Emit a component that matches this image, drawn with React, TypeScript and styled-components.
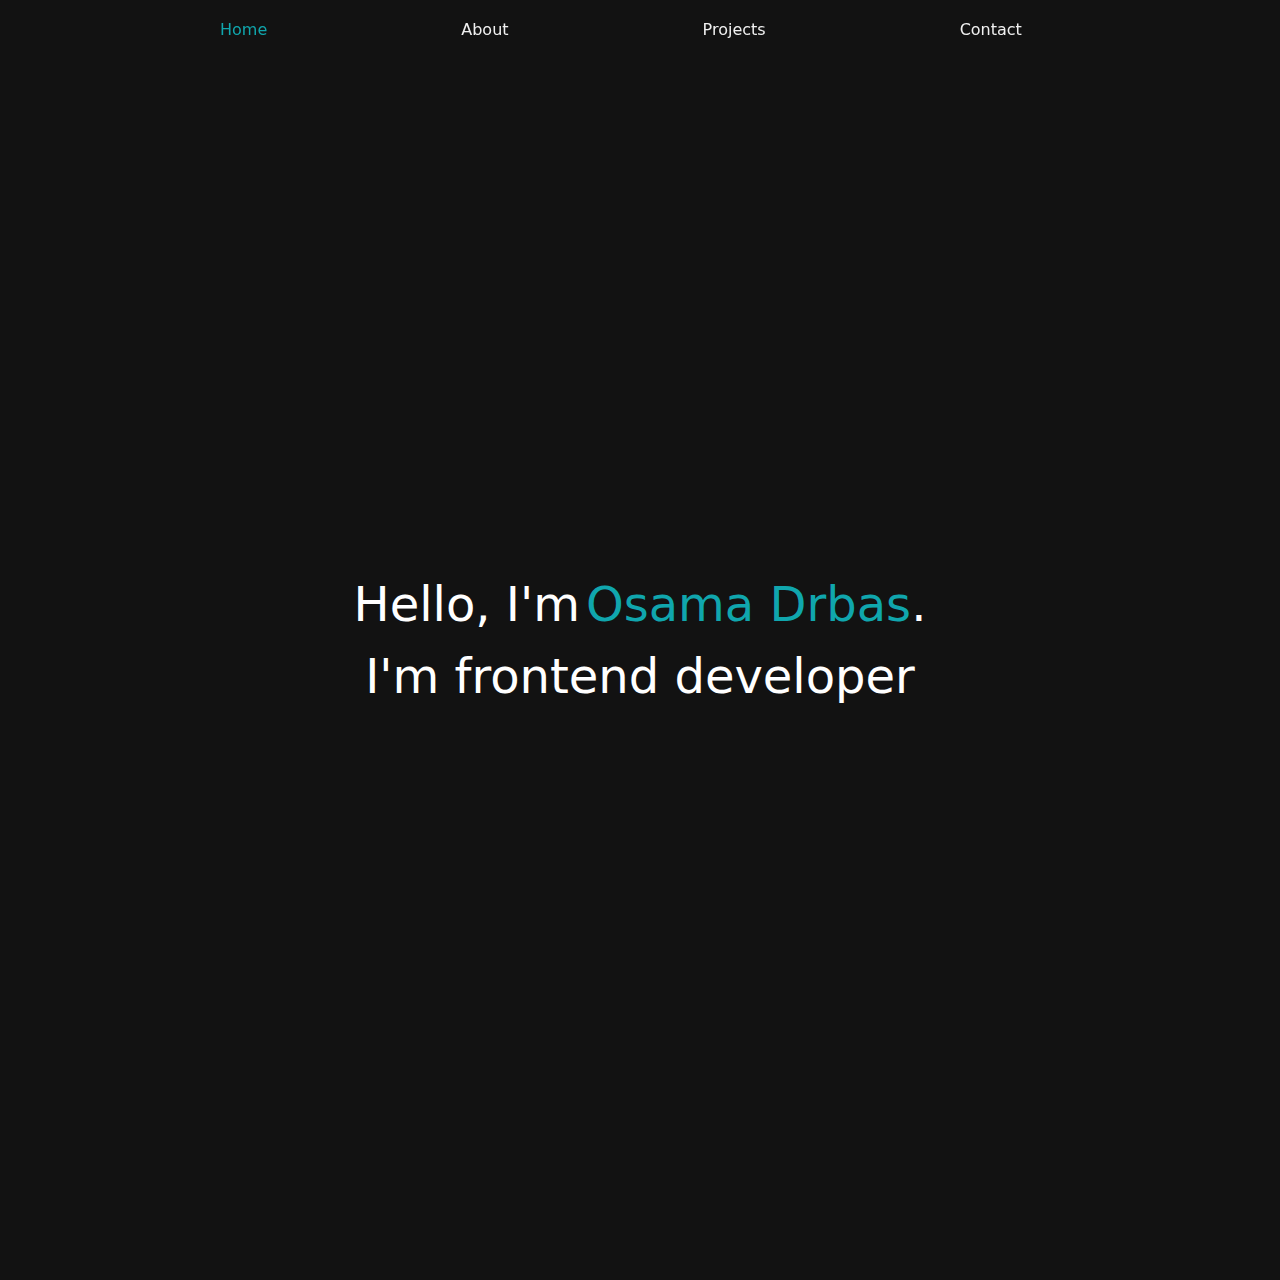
import styled, { createGlobalStyle } from "styled-components";

const GlobalStyle = createGlobalStyle`
  * {
    box-sizing: border-box;
  }
  body {
    margin: 0;
    background-color: #121212;
    font-family: "DejaVu Sans", sans-serif;
    color: #ffffff;
  }
`;

const Nav = styled.nav`
  position: fixed;
  top: 0;
  left: 0;
  right: 0;
  height: 58px;
  display: flex;
  align-items: center;
  padding-left: 220px;
  gap: 194px;
`;

const NavLink = styled.a<{ $active?: boolean }>`
  font-size: 16px;
  color: ${(p) => (p.$active ? "#10a6ad" : "#f0f0f0")};
  text-decoration: none;
  cursor: pointer;
`;

const Hero = styled.section`
  min-height: 100vh;
  display: flex;
  flex-direction: column;
  align-items: center;
  justify-content: center;
`;

const Heading = styled.h1`
  margin: 0;
  font-size: 48px;
  font-weight: normal;
  line-height: 72px;
  text-align: center;
`;

const Name = styled.span`
  color: #10a6ad;
  margin-left: 6px;
`;

function App() {
  return (
    <>
      <GlobalStyle />
      <Nav>
        <NavLink $active>Home</NavLink>
        <NavLink>About</NavLink>
        <NavLink>Projects</NavLink>
        <NavLink>Contact</NavLink>
      </Nav>
      <Hero>
        <Heading>
          Hello, I'm<Name>Osama Drbas</Name>.
        </Heading>
        <Heading>I'm frontend developer</Heading>
      </Hero>
    </>
  );
}

export default App;
